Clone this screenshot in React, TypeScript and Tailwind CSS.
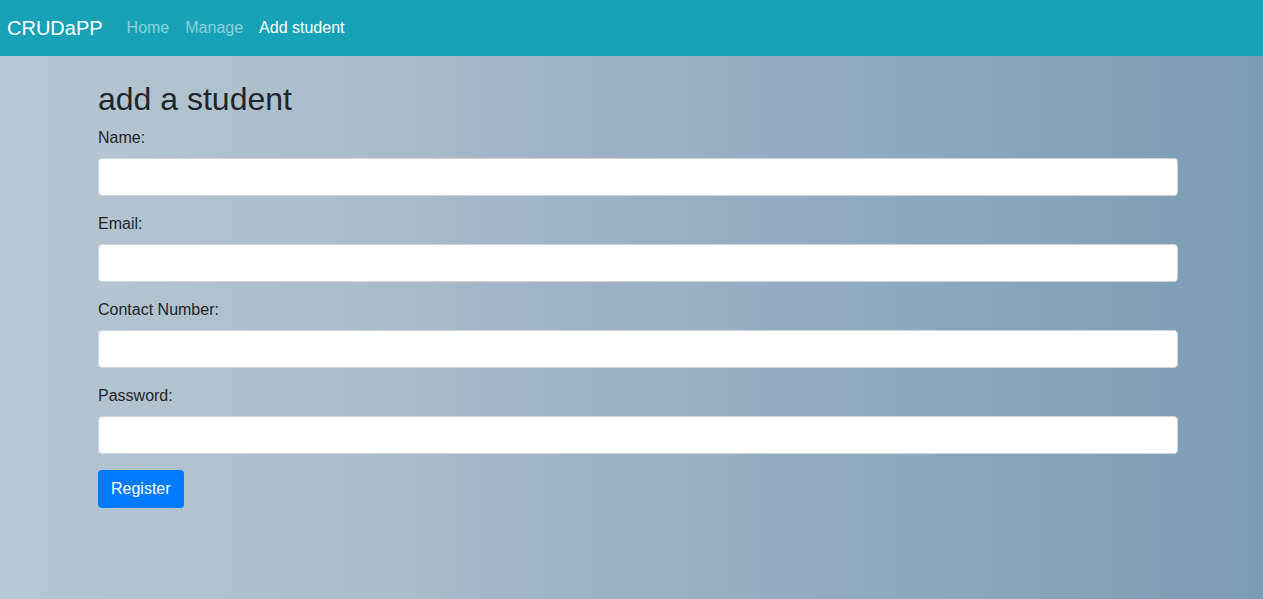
import React from "react";

const fields = ["Name:", "Email:", "Contact Number:", "Password:"];

export default function App() {
  return (
    <div className="min-h-screen flex flex-col font-['Liberation_Sans',Arial,sans-serif] text-[#212529] text-base bg-[linear-gradient(to_right,#b5c7d3_0%,#a8bcc9_33%,#a2b5c9_40%,#7b9db4_100%)]">
      <nav className="h-[56px] bg-[#17a2b8] flex items-center px-[7px]">
        <span className="text-[20px] leading-[30px] text-white mr-[16px]">CRUDaPP</span>
        <div className="flex items-center">
          <span className="px-[8px] leading-[24px] text-white/50">Home</span>
          <span className="px-[8px] leading-[24px] text-white/50">Manage</span>
          <span className="px-[8px] leading-[24px] text-white">Add student</span>
        </div>
      </nav>
      <div className="pl-[98px] pr-[85px] pt-[24px]">
        <h2 className="text-[32px] leading-[38px] font-normal mb-[8px]">add a student</h2>
        <form className="flex flex-col">
          {fields.map((f) => (
            <div key={f} className="mb-[16px] flex flex-col">
              <label className="leading-[24px] mb-[8px]">{f}</label>
              <input
                type={f === "Password:" ? "password" : "text"}
                className="h-[38px] w-full bg-white border border-[#ced4da] rounded-[4px] px-3 outline-none"
              />
            </div>
          ))}
          <div>
            <button
              type="button"
              className="h-[38px] px-[13px] bg-[#007bff] text-white rounded-[4px] leading-[24px]"
            >
              Register
            </button>
          </div>
        </form>
      </div>
    </div>
  );
}
